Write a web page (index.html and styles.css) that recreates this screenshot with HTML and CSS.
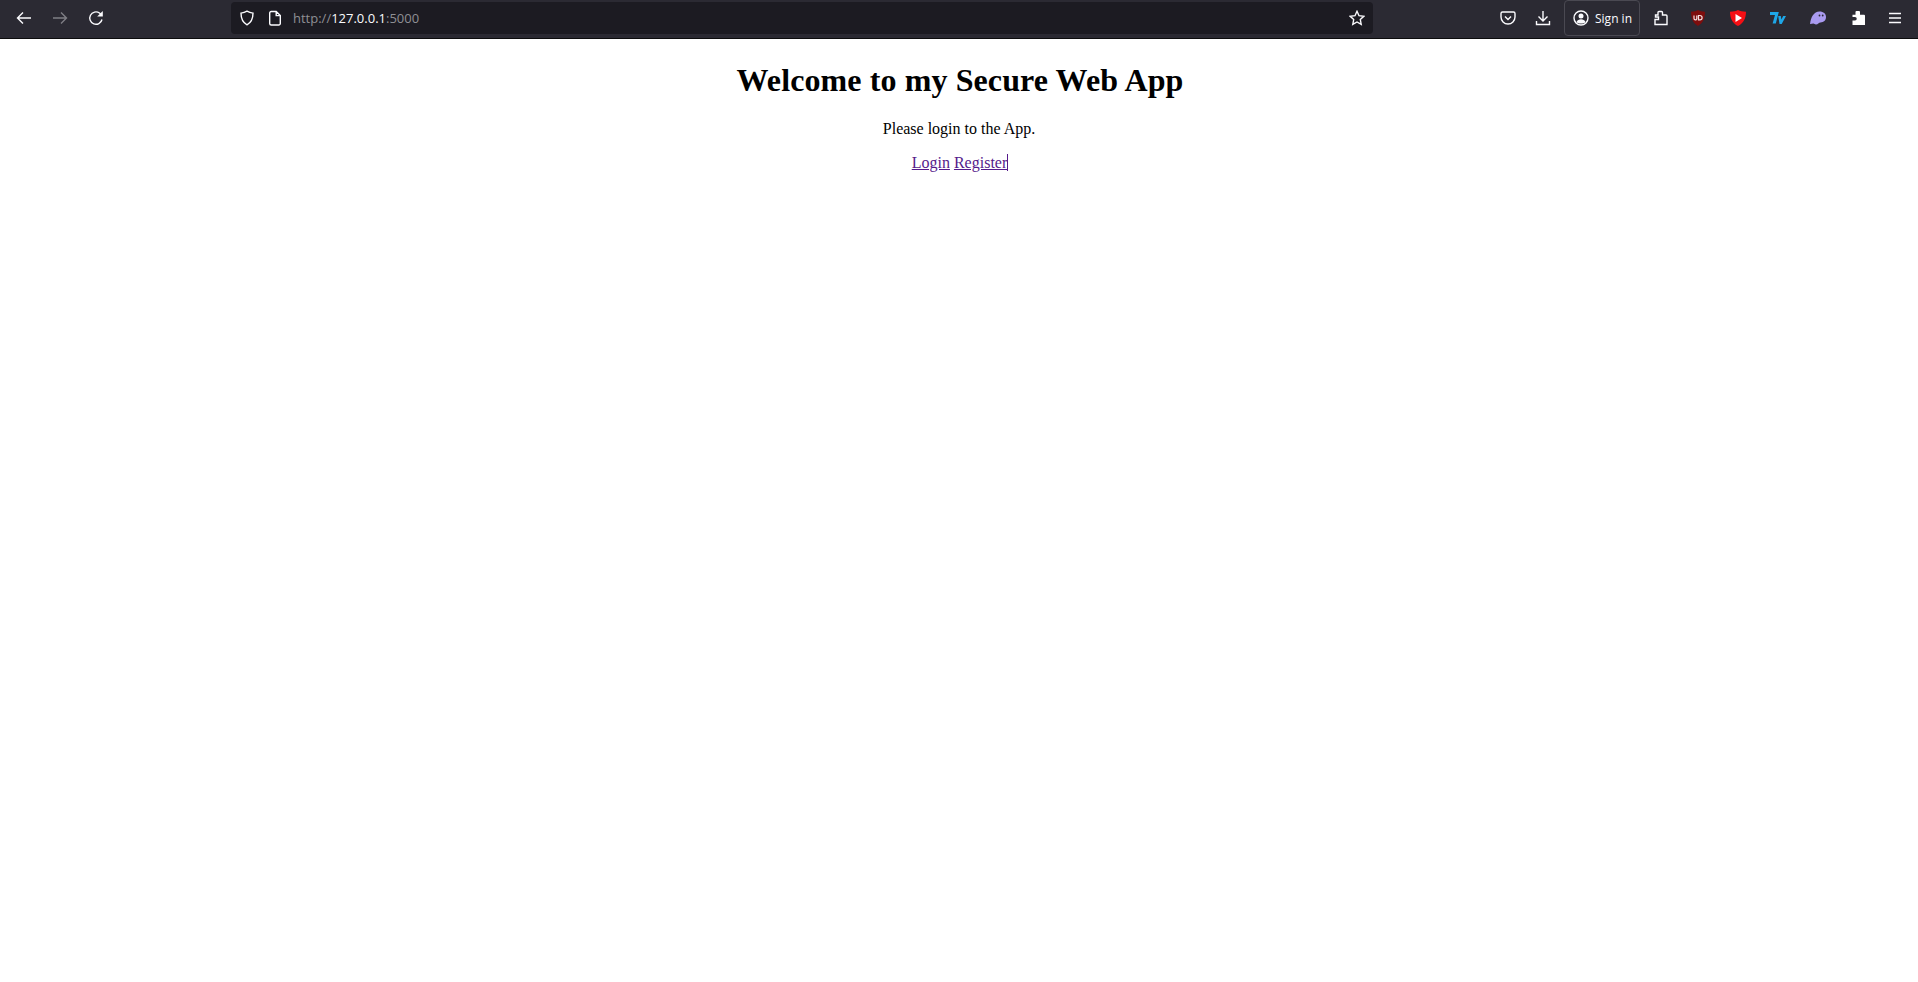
FILE: index.html
```html
<!DOCTYPE html>
<html lang="en">
<head>
    <meta charset="UTF-8">
    <meta name="viewport" content="width=device-width, initial-scale=1.0">
    <title>Secure Web App</title>
    <link rel="stylesheet" href="styles.css">
</head>
<body>
    <div class="toolbar">
        <div class="nav-buttons">
            <svg class="icon" viewBox="0 0 16 16"><path d="M15 8H1.500M7 2.500L1.500 8 7 13.500"/></svg>
            <svg class="icon dim" viewBox="0 0 16 16"><path d="M1 8h13.500M9 2.500L14.500 8 9 13.500"/></svg>
            <svg class="icon" viewBox="0 0 16 16"><path d="M14 9.500A6.200 6.200 0 1 1 11.500 3L13.500 5"/><path class="solid" d="M14.800 1v5.600H9.200z"/></svg>
        </div>
        <div class="urlbar">
            <svg class="icon" viewBox="0 0 16 16"><path d="M8 1.200c2 1.200 4 1.700 6 1.900 0 5.500-1.600 9.500-6 11.700C3.600 12.600 2 8.600 2 3.100c2-.2 4-.7 6-1.900z"/></svg>
            <svg class="icon page-icon" viewBox="0 0 16 16"><path d="M2.700 3A1.500 1.500 0 0 1 4.200 1.500h5l4.100 4.100v7.900a1.500 1.500 0 0 1-1.500 1.500H4.200a1.500 1.500 0 0 1-1.500-1.500zM9.200 1.500v4.100h4.100"/></svg>
            <div class="url"><span class="url-dim">http://</span>127.0.0.1<span class="url-dim">:5000</span></div>
            <svg class="icon star" viewBox="0 0 16 16"><path d="M8 1.300l2 4.400 4.800.6-3.500 3.300.9 4.800L8 12l-4.200 2.400.9-4.800L1.200 6.300 6 5.700z"/></svg>
        </div>
        <div class="tools">
            <svg class="icon" viewBox="0 0 16 16"><path d="M2.500 2h11A1.500 1.500 0 0 1 15 3.500V7A7 7 0 0 1 1 7V3.500A1.500 1.500 0 0 1 2.500 2z"/><path d="M5 6.500L8 9.500l3-3"/></svg>
            <svg class="icon download" viewBox="0 0 16 16"><path d="M8 1v9.500M3.500 6.500L8 11l4.500-4.500M1.500 11v3.500h13V11"/></svg>
            <div class="signin">
                <svg class="icon" viewBox="0 0 16 16"><circle cx="8" cy="8" r="7"/><circle class="solid" cx="8" cy="6" r="2.500"/><path class="solid" d="M3.500 12c.8-2 2.500-2.800 4.500-2.800s3.700.8 4.500 2.800C11 14 5 14 3.500 12z"/></svg>
                <span>Sign in</span>
            </div>
            <svg class="icon ext-first" viewBox="0 0 16 16"><path d="M6 1.500h2.500a1 1 0 0 1 1 1V5H13a1 1 0 0 1 1 1v8.500H2V9.500h3.500V7H2.500V5H5V2.500a1 1 0 0 1 1-1z"/></svg>
            <svg class="ext" viewBox="0 0 16 16"><path fill="#7d0d0d" d="M8 0c2 1 4 1.500 7 1.800 0 6.500-2 11.500-7 14.200C3 13.300 1 8.300 1 1.800 4 1.500 6 1 8 0z"/><path fill="none" stroke="#f4dede" stroke-width="1.200" d="M4 5.500v3a1.400 1.400 0 0 0 2.800 0v-3M8.500 5.500v4.400h1.400a2.200 2.200 0 0 0 0-4.400z"/></svg>
            <svg class="ext" viewBox="0 0 16 16"><path fill="#f50f14" d="M8 0c2 1 4.500 1.500 8 1.700 0 6.500-2.500 11.600-8 14.300C2.500 13.300 0 8.200 0 1.700 3.500 1.500 6 1 8 0z"/><path fill="#fff" d="M5.500 4l6.500 4-6.500 4z"/></svg>
            <svg class="ext" viewBox="0 0 16 16"><path fill="#1ea7e8" d="M0 2h8.800L5.800 13.500H2.600L5 5H0zM8.200 6h2.600l.6 3.500L13.200 6H16l-4.300 8H9.500z"/></svg>
            <svg class="ext" viewBox="0 0 16 16"><path fill="#a99af0" d="M0 14.500C.8 7 3.800 1.500 9.500 1.500c4 0 6.500 2.400 6.500 5.400 0 3.300-2.300 5.300-5.500 5.500-1.700.1-2.600 2-4.500 2-1.200 0-1.600-.9-2.700-.9-1.200 0-2.100.8-3.300.5z"/><circle fill="#2b2a33" cx="9.500" cy="5.500" r=".9"/><circle fill="#2b2a33" cx="12.700" cy="5.500" r=".9"/></svg>
            <svg class="ext" viewBox="0 0 16 16"><path fill="#fff" d="M6.500 1h2.500a1 1 0 0 1 1 1v2.800h4a1 1 0 0 1 1 1V15H2.500V10.500H5a1.500 1.500 0 0 0 0-3.500H2.500V4.800h3V2a1 1 0 0 1 1-1z"/></svg>
            <svg class="icon menu" viewBox="0 0 16 16"><path d="M2 3.500h12M2 8h12M2 12.500h12"/></svg>
        </div>
    </div>

    <div class="content">
        <h1>Welcome to my Secure Web App</h1>
        <p>Please login to the App.</p>
        <p class="links"><a href="#login">Login</a> <a href="#register">Register</a><span class="caret"></span></p>
    </div>
</body>
</html>
```

FILE: styles.css
```css
body {
    margin: 0;
    background-color: #fff;
    font-family: "Liberation Serif", serif;
    color: #000;
}
.toolbar {
    display: flex;
    align-items: center;
    height: 39px;
    padding-bottom: 2px;
    background-color: #2b2a33;
    border-bottom: 1px solid #0c0c0d;
    box-sizing: border-box;
    font-family: "Open Sans", "Noto Sans", sans-serif;
}
.icon {
    width: 16px;
    height: 16px;
    flex: none;
    fill: none;
    stroke: #fbfbfe;
    stroke-width: 1.400;
}
.icon .solid {
    fill: #fbfbfe;
    stroke: none;
}
.dim {
    opacity: 0.4;
}
.nav-buttons {
    display: flex;
    gap: 20px;
    width: 231px;
    padding-left: 16px;
    box-sizing: border-box;
}
.urlbar {
    display: flex;
    align-items: center;
    width: 1142px;
    height: 32px;
    padding: 0 8px;
    box-sizing: border-box;
    background-color: #1c1b22;
    border-radius: 4px;
}
.page-icon {
    margin-left: 12px;
}
.url {
    flex: 1;
    margin-left: 10px;
    font-size: 13px;
    color: #fbfbfe;
}
.url-dim {
    color: #8f8f94;
}
.tools {
    display: flex;
    align-items: center;
    margin-left: 127px;
}
.download {
    margin-left: 19px;
}
.signin {
    display: flex;
    align-items: center;
    gap: 6px;
    width: 76px;
    height: 36px;
    margin-left: 13px;
    padding: 0 8px;
    border: 1px solid #4a4952;
    border-radius: 4px;
    font-size: 12px;
    white-space: nowrap;
    color: #fbfbfe;
    box-sizing: border-box;
}
.ext-first {
    margin-left: 13px;
}
.ext {
    width: 16px;
    height: 16px;
    flex: none;
    margin-left: 24px;
}
.ext-first + .ext {
    margin-left: 21px;
}
.menu {
    margin-left: 21px;
}
.content {
    text-align: center;
}
h1 {
    margin: 23px 0 21px;
    padding-left: 2px;
    font-size: 32px;
    letter-spacing: 0.1px;
}
p {
    margin: 16px 0;
    font-size: 16px;
}
a {
    color: #551a8b;
}
.links {
    margin-top: 15px;
    padding-left: 2px;
}
.caret {
    display: inline-block;
    width: 1px;
    height: 17px;
    background-color: #551a8b;
    vertical-align: text-bottom;
}
```
